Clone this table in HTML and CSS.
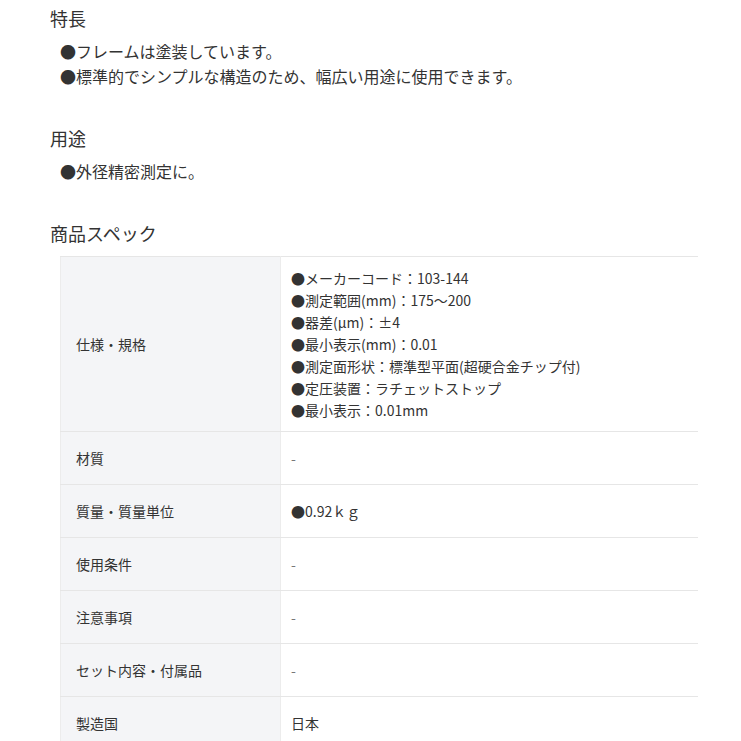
FILE: index.html
```html
<!DOCTYPE html>
<html lang="ja">

<head>
  <meta charset="UTF-8" />
  <meta name="viewport" content="width=device-width, initial-scale=1.0" />
  <title>商品詳細</title>
  <link rel="stylesheet" href="styles.css">
</head>

<body>
  <div class="container">
    <h2 class="section-title">特長</h2>
    <ul class="point-list">
      <li>●フレームは塗装しています。</li>
      <li>●標準的でシンプルな構造のため、幅広い用途に使用できます。</li>
    </ul>

    <h2 class="section-title">用途</h2>
    <ul class="point-list">
      <li>●外径精密測定に。</li>
    </ul>

    <h2 class="section-title">商品スペック</h2>
    <table class="spec-table">
      <tr>
        <th>仕様・規格</th>
        <td>
          ●メーカーコード：103-144<br>
          ●測定範囲(mm)：175～200<br>
          ●器差(μm)：±4<br>
          ●最小表示(mm)：0.01<br>
          ●測定面形状：標準型平面(超硬合金チップ付)<br>
          ●定圧装置：ラチェットストップ<br>
          ●最小表示：0.01mm
        </td>
      </tr>
      <tr>
        <th>材質</th>
        <td class="empty">-</td>
      </tr>
      <tr>
        <th>質量・質量単位</th>
        <td>●0.92ｋｇ</td>
      </tr>
      <tr>
        <th>使用条件</th>
        <td class="empty">-</td>
      </tr>
      <tr>
        <th>注意事項</th>
        <td class="empty">-</td>
      </tr>
      <tr>
        <th>セット内容・付属品</th>
        <td class="empty">-</td>
      </tr>
      <tr>
        <th>製造国</th>
        <td>日本</td>
      </tr>
    </table>
  </div>
</body>

</html>
```

FILE: styles.css
```css
body {
  font-family: "Noto Sans CJK JP", "Noto Sans", sans-serif;
  color: #333;
  background-color: #fff;
  margin: 0;
  padding: 0;
}

.container {
  padding: 5px 0 0 50px;
}

.section-title {
  font-size: 18px;
  font-weight: normal;
  line-height: 26px;
  margin: 0 0 8px;
}

.point-list {
  list-style: none;
  margin: 0 0 36px;
  padding: 0 0 0 10px;
  font-size: 16px;
  line-height: 25px;
}

.spec-table {
  width: 638px;
  margin: 10px 0 0 10px;
  border-collapse: collapse;
  font-size: 14px;
  line-height: 22px;
}

.spec-table th,
.spec-table td {
  border-top: 1px solid #e6e6e6;
  border-bottom: 1px solid #e6e6e6;
  padding: 15px 10px;
  text-align: left;
  vertical-align: middle;
  font-weight: normal;
}

.spec-table th {
  width: 194px;
  padding-left: 15px;
  background-color: #f4f5f7;
  border-left: 1px solid #ececec;
  border-right: 1px solid #ececec;
}

.spec-table tr:first-child td {
  padding-top: 10px;
  padding-bottom: 10px;
}

.spec-table td.empty {
  color: #777;
}
```
